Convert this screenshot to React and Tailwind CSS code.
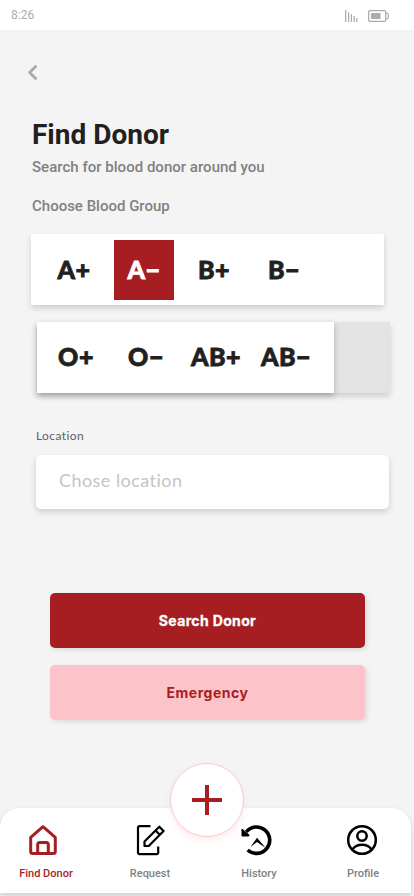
const roboto = "font-[Roboto,sans-serif]";

function BloodType({ label, active = false, offset = "pb-[2px]" }) {
  return (
    <button
      className={`flex h-[60px] w-[60px] shrink-0 items-center justify-center whitespace-nowrap text-[25px] font-black leading-none tracking-[0.5px] [-webkit-text-stroke:0.8px_currentColor] font-['Lato',sans-serif] ${offset} ${
        active ? "bg-[#a61e22] text-white" : "text-[#231f1e]"
      }`}
    >
      {label}
    </button>
  );
}

function HomeIcon() {
  return (
    <svg width="30" height="32" viewBox="0 0 30 32" fill="none" stroke="#a61e22" strokeWidth="3" strokeLinejoin="round">
      <path d="M2.700 13.400 15 2.700 27.300 13.400V27.500a2 2 0 0 1-2 2H4.700a2 2 0 0 1-2-2Z" />
      <path d="M9.700 29.500V20.500a2 2 0 0 1 2-2h6.600a2 2 0 0 1 2 2v9" />
    </svg>
  );
}

function RequestIcon() {
  return (
    <svg width="30" height="32" viewBox="0 0 30 32" fill="none" stroke="#000" strokeWidth="2.200" strokeLinejoin="round">
      <path d="M15.500 2.200H4.500a1.500 1.500 0 0 0-1.500 1.500v25a1.500 1.500 0 0 0 1.500 1.500h17.200a1.500 1.500 0 0 0 1.500-1.500V22.500" />
      <path d="M9.500 17.500 24.300 2.700l4.300 4.300L13.700 22H9.500ZM20.500 6.500l4.300 4.300" />
    </svg>
  );
}

function HistoryIcon() {
  return (
    <svg width="32" height="32" viewBox="0 0 32 32" fill="none">
      <path d="M5.300 7.800A13.200 13.200 0 1 1 6.700 26" stroke="#000" strokeWidth="3.600" />
      <path d="M1 5 8.300 11.300 7.500 12H1Z" fill="#000" stroke="#000" strokeWidth="1" />
      <path d="M9.500 23 16 13.700 24.700 24 16 18Z" fill="#000" />
    </svg>
  );
}

function ProfileIcon() {
  return (
    <svg width="32" height="32" viewBox="0 0 32 32" fill="none" stroke="#000" strokeWidth="2.500">
      <circle cx="16" cy="16" r="13.800" />
      <circle cx="16" cy="12" r="4.700" />
      <path d="M6.300 25.500C11 19.300 21 19.300 25.700 25.500" />
    </svg>
  );
}

function NavItem({ label, icon, className }) {
  return (
    <a className={`flex flex-col items-center ${className}`}>
      <span className="flex h-8 items-center">{icon}</span>
      <span className="mt-[11px] whitespace-nowrap text-[11px] font-medium leading-[13px]">{label}</span>
    </a>
  );
}

export default function App() {
  return (
    <div className={`flex h-[896px] w-[414px] flex-col overflow-hidden bg-[#f4f4f4] ${roboto}`}>
      <header className="flex h-[30px] shrink-0 items-center justify-between bg-white pl-[11px] pr-[25px] text-[#acacac]">
        <span className="text-[12px] leading-[14px]">8:26</span>
        <div className="flex items-center gap-[10px] pt-[2px]">
          <svg width="13" height="12" viewBox="0 0 13 12" fill="currentColor">
            <path d="M0 0h1.300v12H0ZM3 2h1.200v10H3ZM5.800 4H7v8H5.800ZM8.500 6h1.300v6H8.500ZM11.200 8h1.300v4h-1.300Z" />
          </svg>
          <svg width="21" height="12" viewBox="0 0 21 12" fill="none" stroke="currentColor">
            <rect x=".7" y=".7" width="17" height="10.600" rx="1.300" strokeWidth="1.300" />
            <rect x="3" y="3" width="9.500" height="6" fill="currentColor" stroke="none" />
            <path d="M18 3h1.500l.8 1v4l-.8 1H18" strokeWidth="1.100" />
          </svg>
        </div>
      </header>

      <main className="flex flex-col">
        <button className="ml-[27px] mt-[34px] h-[17px] w-3">
          <svg width="12" height="17" viewBox="0 0 12 17" fill="none" stroke="#a9a9a9" strokeWidth="2.800" strokeLinecap="round" strokeLinejoin="round">
            <path d="m8.600 2.500-6 6 6 6" />
          </svg>
        </button>

        <section className="ml-8 mt-[37px]">
          <h1 className="text-[28px] font-bold leading-[33px] text-[#231f1e]">Find Donor</h1>
          <p className="mt-[7px] text-[15px] font-medium leading-[18px] tracking-[0.02px] text-[#818181]">Search for blood donor around you</p>
          <h2 className="mt-[21px] text-[15px] font-medium leading-[18px] text-[#818181]">Choose Blood Group</h2>
        </section>

        <div className="ml-[31px] mt-[19px] flex h-[71px] w-[353px] items-center gap-[10px] bg-white pl-[13px] shadow-[0_3px_6px_rgba(0,0,0,0.16)]">
          <BloodType label="A+" offset="pb-0" />
          <BloodType label="A−" offset="pb-0" active />
          <BloodType label="B+" offset="pb-0" />
          <BloodType label="B−" offset="pb-0" />
        </div>

        <div className="ml-[37px] mt-[17px] flex h-[71px] w-[353px] bg-[#e3e3e3] shadow-[0_3px_6px_rgba(0,0,0,0.16)]">
          <div className="flex h-full w-[297px] items-center gap-[10px] bg-white pl-[9px] shadow-[0_3px_6px_rgba(0,0,0,0.24)]">
            <BloodType label="O+" />
            <BloodType label="O−" />
            <BloodType label="AB+" />
            <BloodType label="AB−" />
          </div>
        </div>

        <label className="ml-9 mt-[35px] text-[12px] leading-4 tracking-[0.4px] text-[#606060] font-[Lato,sans-serif]">Location</label>
        <div className="ml-9 mt-[11px] flex h-[54px] w-[353px] items-center rounded-[5px] bg-white pb-[4px] pl-[23px] text-[18px] tracking-[0.45px] text-[#c4c4c4] shadow-[0_3px_6px_rgba(0,0,0,0.16)] font-[Lato,sans-serif]">
          Chose location
        </div>

        <div className="ml-[50px] mt-[84px] flex w-[315px] flex-col gap-[17px] text-[14px] font-bold font-['Inter',sans-serif]">
          <button className="h-[55px] rounded-[5px] bg-[#a61e22] tracking-[0.35px] text-white shadow-[2px_2px_5px_rgba(0,0,0,0.1)] [-webkit-text-stroke:0.3px_currentColor]">Search Donor</button>
          <button className="h-[55px] rounded-[5px] bg-[#fcc3c9] tracking-[0.5px] text-[#a61e22] shadow-[2px_2px_5px_rgba(0,0,0,0.1)]">Emergency</button>
        </div>
      </main>

      <nav className="relative mt-[88px] flex h-[85px] w-[411px] shrink-0 rounded-t-[20px] bg-white pt-4 text-[#818181] shadow-[0_3px_6px_rgba(0,0,0,0.16)]">
        <NavItem label="Find Donor" icon={<HomeIcon />} className="ml-[19px] w-[54px] text-[#a61e22] [&>span:first-child]:-ml-[6px]" />
        <NavItem label="Request" icon={<RequestIcon />} className="ml-[57px] w-10" />
        <NavItem label="History" icon={<HistoryIcon />} className="ml-[71px] w-9 [&>span:first-child]:-ml-[4px]" />
        <NavItem label="Profile" icon={<ProfileIcon />} className="ml-[68px] w-9 [&>span:first-child]:-ml-[3px]" />
        <button className="absolute left-[170px] top-[-45px] flex h-[74px] w-[74px] items-center justify-center rounded-full border border-[#fccbcb] bg-white shadow-[0_3px_6px_rgba(252,195,201,0.35)]">
          <svg width="32" height="32" viewBox="0 0 32 32" stroke="#a61e22" strokeWidth="4">
            <path d="M16 1v30M1 16h30" />
          </svg>
        </button>
      </nav>
    </div>
  );
}
